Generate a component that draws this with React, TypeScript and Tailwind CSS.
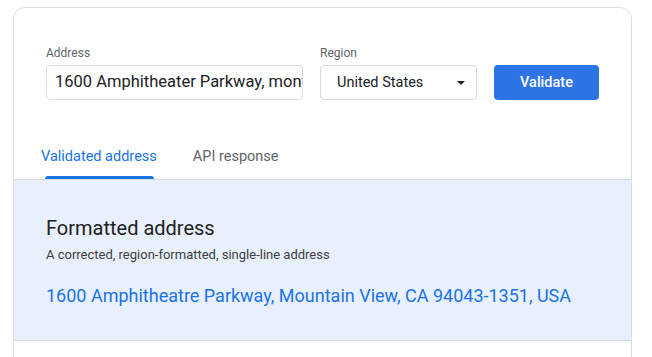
export default function App() {
  return (
    <div className="h-[357px] bg-white pl-[13px] pt-[7px] font-['Roboto',sans-serif] overflow-hidden">
      <div className="w-[619px] h-[400px] rounded-xl border border-[#dadce0] overflow-hidden">
        <div className="flex items-end gap-[17px] px-[32px] pt-[37px]">
          <div className="flex flex-col shrink-0">
            <label className="text-xs leading-4 text-[#5f6368] mb-1">Address</label>
            <div className="w-[257px] h-[35px] rounded border border-[#dadce0] flex items-center pl-2 overflow-hidden">
              <span className="whitespace-nowrap text-[16.5px] text-[#202124]">
                1600 Amphitheater Parkway, montain view, CA
              </span>
            </div>
          </div>
          <div className="flex flex-col shrink-0">
            <label className="text-xs leading-4 text-[#5f6368] mb-1">Region</label>
            <div className="w-[157px] h-[35px] rounded border border-[#dadce0] flex items-center justify-between pl-4 pr-[11px]">
              <span className="text-[14.5px] text-[#202124]">United States</span>
              <svg width="8" height="4" viewBox="0 0 8 4">
                <path d="M0 0 L8 0 L4 4 Z" fill="#202124" />
              </svg>
            </div>
          </div>
          <button className="shrink-0 w-[105px] h-[35px] rounded bg-[#2d74e7] text-white text-[14.5px] font-medium">
            Validate
          </button>
        </div>

        <div className="mt-[34px] flex gap-[36px] border-b border-[#dadce0] pl-[27px] h-[46px]">
          <div className="relative flex items-center text-[14.5px] text-[#1a73e8]">
            Validated address
            <span className="absolute bottom-0 left-[4px] right-[3px] h-[3px] rounded-t bg-[#1a73e8]" />
          </div>
          <div className="flex items-center text-[14.5px] text-[#5f6368]">API response</div>
        </div>

        <div className="bg-[#e9f0fd] border-b border-[#dadce0] px-[32px] pt-[34px] pb-[32px]">
          <h2 className="text-xl leading-7 text-[#202124]">Formatted address</h2>
          <p className="mt-[3px] text-[13px] leading-5 text-[#3c4043]">
            A corrected, region-formatted, single-line address
          </p>
          <p className="mt-[19px] text-[18px] leading-6 text-[#1a73e8]">
            1600 Amphitheatre Parkway, Mountain View, CA 94043-1351, USA
          </p>
        </div>
      </div>
    </div>
  );
}
